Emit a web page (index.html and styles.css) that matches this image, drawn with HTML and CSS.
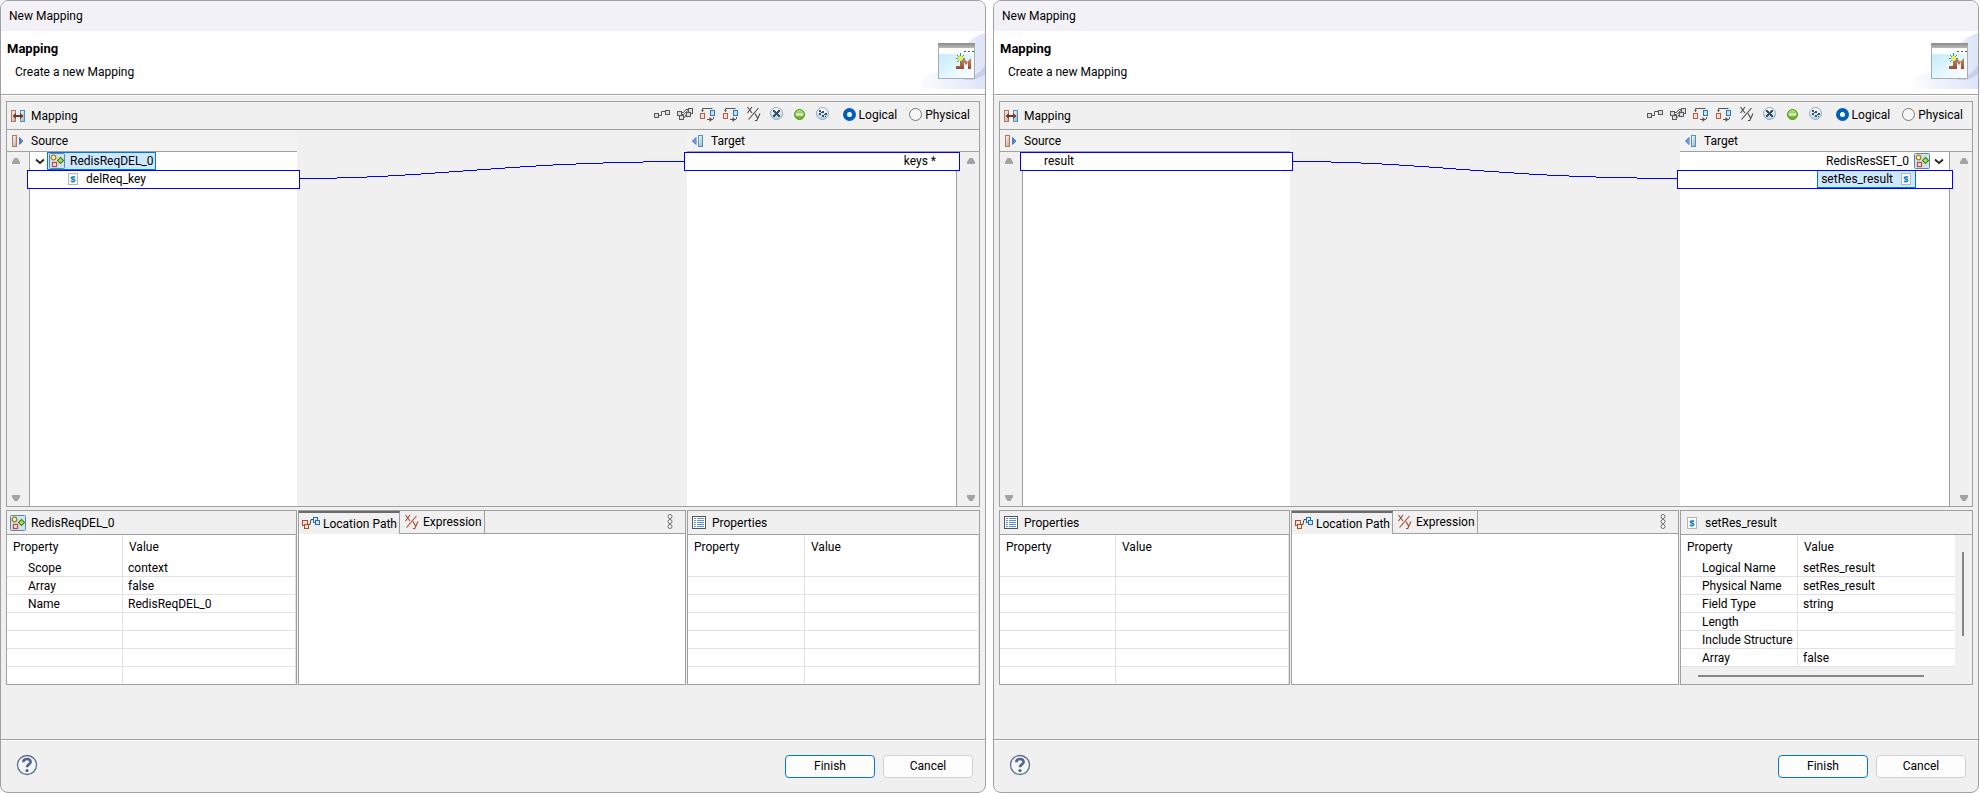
FILE: index.html
```html
<!DOCTYPE html>
<html lang="en">
<head>
    <meta charset="UTF-8">
    <meta name="viewport" content="width=device-width, initial-scale=1.0">
    <title>New Mapping</title>
    <link rel="stylesheet" href="styles.css">
</head>
<body>

    <!-- Icons shared by both dialogs -->
    <svg class="sprite" width="0" height="0" aria-hidden="true">
        <defs>
            <linearGradient id="g-metal" x1="0" y1="0" x2="1" y2="1">
                <stop offset="0" stop-color="#ffffff"/><stop offset="1" stop-color="#a9a9a9"/>
            </linearGradient>
            <linearGradient id="g-arrow" x1="0" y1="0" x2="1" y2="0">
                <stop offset="0" stop-color="#2a5fc4"/><stop offset="1" stop-color="#a8c6f2"/>
            </linearGradient>
            <linearGradient id="g-ball" x1="0" y1="0" x2="0" y2="1">
                <stop offset="0" stop-color="#ffffff"/><stop offset="1" stop-color="#a9d4f0"/>
            </linearGradient>
            <linearGradient id="g-green" x1="0" y1="0" x2="0" y2="1">
                <stop offset="0" stop-color="#b5e37a"/><stop offset="1" stop-color="#58b01c"/>
            </linearGradient>
            <linearGradient id="g-glow" x1="0" y1="0" x2="1" y2="0">
                <stop offset="0" stop-color="#fbfcff"/><stop offset="1" stop-color="#dde5f8"/>
            </linearGradient>
            <linearGradient id="g-pane" x1="0" y1="0" x2="1" y2="1">
                <stop offset="0" stop-color="#c4ecfb"/><stop offset="1" stop-color="#ffffff"/>
            </linearGradient>
            <linearGradient id="g-bar" x1="0" y1="0" x2="0" y2="1">
                <stop offset="0" stop-color="#8a8a8a"/><stop offset="1" stop-color="#b9b9b9"/>
            </linearGradient>
            <linearGradient id="g-m" x1="0" y1="0" x2="0" y2="1">
                <stop offset="0" stop-color="#d08a64"/><stop offset="1" stop-color="#9a4a2a"/>
            </linearGradient>
        </defs>

        <symbol id="i-mapping" viewBox="0 0 16 16">
            <rect x="0.5" y="2.5" width="4" height="11" fill="url(#g-metal)" stroke="#c2714f"/>
            <rect x="9.5" y="2.5" width="4" height="11" fill="url(#g-metal)" stroke="#3f95d6"/>
            <path d="M1.5 8l3.5-3v2h4V5l3.5 3L9 11V9H5v2z" fill="#6b3a2a"/>
        </symbol>
        <symbol id="i-source" viewBox="0 0 16 16">
            <rect x="1.5" y="2.5" width="4" height="11" fill="url(#g-metal)" stroke="#c2714f"/>
            <path d="M8.5 4.5v7l3.5-3.5z" fill="url(#g-arrow)" stroke="#4a78cc"/>
        </symbol>
        <symbol id="i-target" viewBox="0 0 16 16">
            <rect x="7.5" y="2.5" width="4" height="11" fill="url(#g-metal)" stroke="#3f95d6"/>
            <path d="M5 4.5v7L1.5 8z" fill="url(#g-arrow)" stroke="#4a78cc"/>
        </symbol>
        <symbol id="i-struct" viewBox="0 0 16 16">
            <rect x="0.5" y="0.5" width="15" height="15" rx="1" fill="#cfe2f0" stroke="#5f86a8"/>
            <circle cx="4.5" cy="4.5" r="2.3" fill="#fbf2c0" stroke="#a8801a" stroke-width="1.3"/>
            <rect x="3.5" y="9.5" width="4" height="4" fill="#fbe3e0" stroke="#c04a40" stroke-width="1.2"/>
            <path d="M11.5 4.5L14.5 7.5L11.5 10.500L8.500 7.500z" fill="#b9dd6a" stroke="#458c14" stroke-width="1.200"/>
        </symbol>
        <symbol id="i-string" viewBox="0 0 16 16">
            <rect x="3.500" y="2.500" width="9" height="11" fill="#fbfbfb" stroke="#b4b4b4"/>
            <path d="M10 6.500C8.500 5.500 6.300 5.800 6.300 7C6.300 8.400 9.700 7.800 9.700 9.400C9.700 10.800 7.300 11 6 10" fill="none" stroke="#1c86b8" stroke-width="1.600"/>
        </symbol>
        <symbol id="i-props" viewBox="0 0 16 16">
            <rect x="1.500" y="1.500" width="13" height="12" fill="#ffffff" stroke="#555555"/>
            <path d="M3 3.500h10M3 5.500h10M3 7.500h10M3 9.500h10M3 11.500h10" stroke="#5b8fd0"/>
            <path d="M5.500 3v9" stroke="#ffffff"/>
        </symbol>
        <symbol id="i-chevron" viewBox="0 0 10 16">
            <path d="M1 6.500L5 10l4-3.500" fill="none" stroke="#222222" stroke-width="1.700"/>
        </symbol>
        <symbol id="i-up" viewBox="0 0 10 8">
            <path d="M3.500 1h3L9 5v2H1V5z" fill="#a3a3a3"/>
        </symbol>
        <symbol id="i-down" viewBox="0 0 10 8">
            <path d="M1 1h8v2L6.500 7h-3L1 3z" fill="#a3a3a3"/>
        </symbol>

        <!-- Toolbar -->
        <symbol id="i-link" viewBox="0 0 16 16">
            <rect x="0.500" y="7.500" width="4" height="4" fill="#dcdcdc" stroke="#5a5a5a"/>
            <rect x="11.500" y="4.500" width="4" height="4" fill="#dcdcdc" stroke="#5a5a5a"/>
            <path d="M5 9.500h2.500V5.500H11" fill="none" stroke="#555555"/>
        </symbol>
        <symbol id="i-links" viewBox="0 0 16 16">
            <path d="M5 6.500h1.500L9 3.500h2M6 11.500h1.500L9 8.500M4 8.500h2.500L11 4.500" fill="none" stroke="#555555"/>
            <rect x="0.500" y="5.500" width="4" height="4" fill="#dcdcdc" stroke="#5a5a5a"/>
            <rect x="2.500" y="9.500" width="4" height="4" fill="#dcdcdc" stroke="#5a5a5a"/>
            <rect x="11.500" y="2.500" width="4" height="5" fill="#dcdcdc" stroke="#5a5a5a"/>
            <rect x="9.500" y="6.500" width="4" height="4" fill="#dcdcdc" stroke="#5a5a5a"/>
        </symbol>
        <symbol id="i-swap" viewBox="0 0 16 16">
            <rect x="0.500" y="7.500" width="4" height="5" fill="#e4e4e4" stroke="#c05a38"/>
            <rect x="10.500" y="4.500" width="4" height="5" fill="#c8e0f5" stroke="#2478c0"/>
            <path d="M2.500 5.500V2.500H12.500M7 13.500H13M13.500 11V13" fill="none" stroke="#555555"/>
            <path d="M1 4l1.500 2L4 4zM9.500 11v5l3-2.500z" fill="#555555"/>
        </symbol>
        <symbol id="i-xy" viewBox="0 0 16 16">
            <path d="M1.500 1L6 7M6 1L1.500 7M12.500 2L2.500 13.500M9 7.500L11.500 12M14 7.500L10.800 14.500H9" fill="none" stroke="currentColor" stroke-width="1.100"/>
        </symbol>
        <symbol id="i-cross" viewBox="0 0 16 16">
            <circle cx="7.500" cy="7.500" r="6" fill="url(#g-ball)" stroke="#93a9b8"/>
            <path d="M4 4h2v1h1v1h1V5h1V4h2v2h-1v1H9v1h1v1h1v2H9v-1H8V9H7v1H6v1H4V9h1V8h1V7H5V6H4z" fill="#3f4f5b"/>
        </symbol>
        <symbol id="i-minus" viewBox="0 0 16 16">
            <circle cx="7.500" cy="8.500" r="5" fill="url(#g-green)" stroke="#4c951c"/>
            <path d="M4 8.500h7" stroke="#f4fbe8" stroke-width="2"/>
        </symbol>
        <symbol id="i-dots" viewBox="0 0 16 16">
            <circle cx="7.500" cy="7.500" r="6" fill="url(#g-ball)" stroke="#93a9b8"/>
            <path d="M4 4h2v2H4zM7 5h2v2H7zM4 7h2v2H4zM10 7h2v2h-2zM7 9h2v2H7zM10 10h1v1h-1zM6 6h1v1H6zM9 8h1v1H9z" fill="#3f4f5b"/>
        </symbol>

        <!-- Lower tabs -->
        <symbol id="i-path" viewBox="0 0 18 16">
            <rect x="0.500" y="4.500" width="5" height="5" fill="#f8e3d8" stroke="#b04c2c"/>
            <rect x="2.500" y="8.500" width="4" height="4" fill="#f8e3d8" stroke="#b04c2c"/>
            <path d="M7 8.500h1l1-5h2" fill="none" stroke="#444444"/>
            <rect x="11.500" y="1.500" width="4" height="5" fill="#d7e9f8" stroke="#2070b4"/>
            <rect x="13.500" y="4.500" width="4" height="4" fill="#d7e9f8" stroke="#2070b4"/>
        </symbol>
        <symbol id="i-menu" viewBox="0 0 8 16">
            <circle cx="4" cy="2.500" r="2" fill="#ffffff" stroke="#6a6a6a"/>
            <circle cx="4" cy="7.500" r="2" fill="#ffffff" stroke="#6a6a6a"/>
            <circle cx="4" cy="12.500" r="2" fill="#ffffff" stroke="#6a6a6a"/>
        </symbol>
        <symbol id="i-help" viewBox="0 0 22 22">
            <circle cx="11" cy="11" r="9.500" fill="#f5f6f8" stroke="#5b6f91" stroke-width="1.300"/>
            <path d="M7.300 8.200C7.300 3.900 14.600 3.900 14.600 7.900C14.600 10.500 11 10.300 11 13.200" fill="none" stroke="#50658a" stroke-width="2.600"/>
            <circle cx="11" cy="16.600" r="1.600" fill="#50658a"/>
        </symbol>

        <symbol id="i-wizard" viewBox="0 0 64 58">
            <path d="M64 2C50 6 42 16 36 26C26 40 12 43 0 45V58H64z" fill="url(#g-glow)"/>
            <path d="M64 34C58 44 50 47 42 49H52C58 47 62 45 64 43z" fill="#c8d1ec"/>
            <rect x="17.500" y="12.500" width="36" height="35" fill="#ffffff" stroke="#a5adb5"/>
            <rect x="17" y="12" width="37" height="5" fill="url(#g-bar)"/>
            <path d="M43 20h2v1h-2zM47 20h2v1h-2zM51 20h2v1h-2z" fill="#555555"/>
            <rect x="18" y="23" width="34" height="24" fill="url(#g-pane)"/>
            <path d="M35 35h4V27h4l3 4 4-4v11h-3v-7l-2 3-2-3v7h-8z" fill="url(#g-m)"/>
            <path d="M39.500 22v10M35 27.500h9M36 24l7 7M43 24l-7 7" stroke="#2f93a8"/>
            <circle cx="39.500" cy="27.500" r="2.500" fill="#f7ec3c"/>
        </symbol>
    </svg>

    <main class="desktop">

        <!-- Request mapping dialog -->
        <section class="dialog">
            <div class="titlebar">New Mapping</div>
            <header class="banner">
                <div>
                    <h1>Mapping</h1>
                    <p>Create a new Mapping</p>
                </div>
                <svg class="wizard"><use href="#i-wizard"/></svg>
            </header>

            <div class="content">
                <div class="mapping">
                    <div class="toolbar">
                        <svg class="icon"><use href="#i-mapping"/></svg>
                        <h2>Mapping</h2>
                        <div class="tools">
                            <button type="button" aria-label="Link"><svg class="icon"><use href="#i-link"/></svg></button>
                            <button type="button" aria-label="Link all"><svg class="icon"><use href="#i-links"/></svg></button>
                            <button type="button" aria-label="Move source"><svg class="icon"><use href="#i-swap"/></svg></button>
                            <button type="button" aria-label="Move target"><svg class="icon"><use href="#i-swap"/></svg></button>
                            <button type="button" aria-label="Expression"><svg class="icon"><use href="#i-xy"/></svg></button>
                            <button type="button" aria-label="Remove"><svg class="icon"><use href="#i-cross"/></svg></button>
                            <button type="button" aria-label="Collapse"><svg class="icon"><use href="#i-minus"/></svg></button>
                            <button type="button" aria-label="Remove all"><svg class="icon"><use href="#i-dots"/></svg></button>
                        </div>
                        <label class="radio"><input type="radio" name="view1" checked>Logical</label>
                        <label class="radio"><input type="radio" name="view1">Physical</label>
                    </div>

                    <div class="canvas">
                        <div class="side source">
                            <div class="side-title"><svg class="icon"><use href="#i-source"/></svg>Source</div>
                            <div class="side-body">
                                <div class="scroll">
                                    <button type="button" aria-label="Scroll up"><svg><use href="#i-up"/></svg></button>
                                    <button type="button" aria-label="Scroll down"><svg><use href="#i-down"/></svg></button>
                                </div>
                                <ul class="tree">
                                    <li class="row root">
                                        <svg class="chevron"><use href="#i-chevron"/></svg>
                                        <span class="node selected"><svg class="icon"><use href="#i-struct"/></svg>RedisReqDEL_0</span>
                                    </li>
                                    <li class="row linked child">
                                        <svg class="icon"><use href="#i-string"/></svg>delReq_key
                                    </li>
                                </ul>
                            </div>
                        </div>

                        <svg class="wire" viewBox="0 0 390 36" preserveAspectRatio="none">
                            <path d="M3 26.500C135 26.500 215 9.500 387 9.500"/>
                        </svg>

                        <div class="side target">
                            <div class="side-title"><svg class="icon"><use href="#i-target"/></svg>Target</div>
                            <div class="side-body">
                                <ul class="tree">
                                    <li class="row linked leaf">keys *</li>
                                </ul>
                                <div class="scroll">
                                    <button type="button" aria-label="Scroll up"><svg><use href="#i-up"/></svg></button>
                                    <button type="button" aria-label="Scroll down"><svg><use href="#i-down"/></svg></button>
                                </div>
                            </div>
                        </div>
                    </div>
                </div>

                <div class="details">
                    <div class="panel">
                        <div class="panel-title"><svg class="icon"><use href="#i-struct"/></svg>RedisReqDEL_0</div>
                        <table class="props">
                            <thead><tr><th>Property</th><th>Value</th></tr></thead>
                            <tbody>
                                <tr><td>Scope</td><td>context</td></tr>
                                <tr><td>Array</td><td>false</td></tr>
                                <tr><td>Name</td><td>RedisReqDEL_0</td></tr>
                                <tr><td></td><td></td></tr>
                                <tr><td></td><td></td></tr>
                                <tr><td></td><td></td></tr>
                                <tr><td></td><td></td></tr>
                            </tbody>
                        </table>
                    </div>

                    <div class="panel">
                        <div class="tabs">
                            <button type="button" class="tab active"><svg class="icon wide"><use href="#i-path"/></svg>Location Path</button>
                            <button type="button" class="tab"><svg class="icon red"><use href="#i-xy"/></svg>Expression</button>
                            <div class="tab-rest">
                                <button type="button" aria-label="View menu"><svg class="menu"><use href="#i-menu"/></svg></button>
                            </div>
                        </div>
                    </div>

                    <div class="panel">
                        <div class="panel-title"><svg class="icon"><use href="#i-props"/></svg>Properties</div>
                        <table class="props">
                            <thead><tr><th>Property</th><th>Value</th></tr></thead>
                            <tbody>
                                <tr><td></td><td></td></tr>
                                <tr><td></td><td></td></tr>
                                <tr><td></td><td></td></tr>
                                <tr><td></td><td></td></tr>
                                <tr><td></td><td></td></tr>
                                <tr><td></td><td></td></tr>
                                <tr><td></td><td></td></tr>
                            </tbody>
                        </table>
                    </div>
                </div>
            </div>

            <footer class="actions">
                <button type="button" class="help" aria-label="Help"><svg><use href="#i-help"/></svg></button>
                <button type="button" class="btn default">Finish</button>
                <button type="button" class="btn">Cancel</button>
            </footer>
        </section>

        <!-- Response mapping dialog -->
        <section class="dialog">
            <div class="titlebar">New Mapping</div>
            <header class="banner">
                <div>
                    <h1>Mapping</h1>
                    <p>Create a new Mapping</p>
                </div>
                <svg class="wizard"><use href="#i-wizard"/></svg>
            </header>

            <div class="content">
                <div class="mapping">
                    <div class="toolbar">
                        <svg class="icon"><use href="#i-mapping"/></svg>
                        <h2>Mapping</h2>
                        <div class="tools">
                            <button type="button" aria-label="Link"><svg class="icon"><use href="#i-link"/></svg></button>
                            <button type="button" aria-label="Link all"><svg class="icon"><use href="#i-links"/></svg></button>
                            <button type="button" aria-label="Move source"><svg class="icon"><use href="#i-swap"/></svg></button>
                            <button type="button" aria-label="Move target"><svg class="icon"><use href="#i-swap"/></svg></button>
                            <button type="button" aria-label="Expression"><svg class="icon"><use href="#i-xy"/></svg></button>
                            <button type="button" aria-label="Remove"><svg class="icon"><use href="#i-cross"/></svg></button>
                            <button type="button" aria-label="Collapse"><svg class="icon"><use href="#i-minus"/></svg></button>
                            <button type="button" aria-label="Remove all"><svg class="icon"><use href="#i-dots"/></svg></button>
                        </div>
                        <label class="radio"><input type="radio" name="view2" checked>Logical</label>
                        <label class="radio"><input type="radio" name="view2">Physical</label>
                    </div>

                    <div class="canvas">
                        <div class="side source">
                            <div class="side-title"><svg class="icon"><use href="#i-source"/></svg>Source</div>
                            <div class="side-body">
                                <div class="scroll">
                                    <button type="button" aria-label="Scroll up"><svg><use href="#i-up"/></svg></button>
                                    <button type="button" aria-label="Scroll down"><svg><use href="#i-down"/></svg></button>
                                </div>
                                <ul class="tree">
                                    <li class="row linked leaf">result</li>
                                </ul>
                            </div>
                        </div>

                        <svg class="wire" viewBox="0 0 390 36" preserveAspectRatio="none">
                            <path d="M3 9.500C135 9.500 215 26.500 387 26.500"/>
                        </svg>

                        <div class="side target">
                            <div class="side-title"><svg class="icon"><use href="#i-target"/></svg>Target</div>
                            <div class="side-body">
                                <ul class="tree">
                                    <li class="row root">
                                        <span class="node">RedisResSET_0<svg class="icon"><use href="#i-struct"/></svg></span>
                                        <svg class="chevron"><use href="#i-chevron"/></svg>
                                    </li>
                                    <li class="row linked child">
                                        <span class="node selected">setRes_result<svg class="icon"><use href="#i-string"/></svg></span>
                                    </li>
                                </ul>
                                <div class="scroll">
                                    <button type="button" aria-label="Scroll up"><svg><use href="#i-up"/></svg></button>
                                    <button type="button" aria-label="Scroll down"><svg><use href="#i-down"/></svg></button>
                                </div>
                            </div>
                        </div>
                    </div>
                </div>

                <div class="details">
                    <div class="panel">
                        <div class="panel-title"><svg class="icon"><use href="#i-props"/></svg>Properties</div>
                        <table class="props">
                            <thead><tr><th>Property</th><th>Value</th></tr></thead>
                            <tbody>
                                <tr><td></td><td></td></tr>
                                <tr><td></td><td></td></tr>
                                <tr><td></td><td></td></tr>
                                <tr><td></td><td></td></tr>
                                <tr><td></td><td></td></tr>
                                <tr><td></td><td></td></tr>
                                <tr><td></td><td></td></tr>
                            </tbody>
                        </table>
                    </div>

                    <div class="panel">
                        <div class="tabs">
                            <button type="button" class="tab active"><svg class="icon wide"><use href="#i-path"/></svg>Location Path</button>
                            <button type="button" class="tab"><svg class="icon red"><use href="#i-xy"/></svg>Expression</button>
                            <div class="tab-rest">
                                <button type="button" aria-label="View menu"><svg class="menu"><use href="#i-menu"/></svg></button>
                            </div>
                        </div>
                    </div>

                    <div class="panel">
                        <div class="panel-title"><svg class="icon"><use href="#i-string"/></svg>setRes_result</div>
                        <div class="scroll-area">
                            <table class="props">
                                <thead><tr><th>Property</th><th>Value</th></tr></thead>
                                <tbody>
                                    <tr><td>Logical Name</td><td>setRes_result</td></tr>
                                    <tr><td>Physical Name</td><td>setRes_result</td></tr>
                                    <tr><td>Field Type</td><td>string</td></tr>
                                    <tr><td>Length</td><td></td></tr>
                                    <tr><td>Include Structure</td><td></td></tr>
                                    <tr><td>Array</td><td>false</td></tr>
                                </tbody>
                            </table>
                            <div class="bar-v"><div class="thumb"></div></div>
                            <div class="bar-h"><div class="thumb"></div></div>
                        </div>
                    </div>
                </div>
            </div>

            <footer class="actions">
                <button type="button" class="help" aria-label="Help"><svg><use href="#i-help"/></svg></button>
                <button type="button" class="btn default">Finish</button>
                <button type="button" class="btn">Cancel</button>
            </footer>
        </section>

    </main>

</body>
</html>
```
FILE: styles.css
```css
* {
    box-sizing: border-box;
}
body {
    margin: 0;
    background-color: white;
    font-family: Roboto, "Noto Sans CJK KR", sans-serif;
    font-size: 12px;
    line-height: 16px;
    color: black;
}
button {
    padding: 0;
    border: none;
    background: none;
    font: inherit;
    color: inherit;
}
h1, h2, p, ul {
    margin: 0;
    padding: 0;
}
svg {
    display: block;
    flex: none;
}
.sprite {
    position: absolute;
}
.icon {
    width: 16px;
    height: 16px;
}
.icon.wide {
    width: 18px;
}
.icon.red {
    color: #a5462c;
}
.desktop {
    display: grid;
    grid-template-columns: 1fr 1fr;
    gap: 7px;
    min-height: 100vh;
    padding-right: 1px;
}

/* Dialog frame */
.dialog {
    display: flex;
    flex-direction: column;
    min-width: 0;
    border: 1px solid #a0a0a0;
    border-radius: 8px;
    background-color: #f0f0f0;
    overflow: hidden;
}
.titlebar {
    height: 30px;
    padding: 7px 8px;
    background-color: #f3f1f8;
}
.banner {
    display: flex;
    justify-content: space-between;
    align-items: flex-start;
    height: 64px;
    border-bottom: 1px solid #a0a0a0;
    background-color: white;
}
.banner h1 {
    padding: 10px 6px 7px;
    font-size: 13px;
    line-height: 16px;
}
.banner p {
    padding-left: 14px;
}
.wizard {
    width: 64px;
    height: 58px;
}
.content {
    display: flex;
    flex-direction: column;
    flex: 1;
    gap: 3px;
    padding: 5px 5px 54px;
    border-top: 1px solid white;
}

/* Mapping editor */
.mapping {
    display: flex;
    flex-direction: column;
    flex: 1;
    border: 1px solid #a0a0a0;
}
.toolbar {
    display: flex;
    align-items: center;
    height: 28px;
    padding: 0 9px 0 4px;
    border-bottom: 1px solid #a0a0a0;
}
.toolbar h2 {
    flex: 1;
    padding-left: 4px;
    font-size: 12px;
    font-weight: normal;
}
.tools {
    display: flex;
    gap: 7px;
    padding-bottom: 4px;
    color: #4a4a4a;
}
.radio {
    display: flex;
    align-items: center;
    gap: 3px;
    padding-bottom: 2px;
    margin-left: 12px;
}
.radio input {
    appearance: none;
    width: 13px;
    height: 13px;
    margin: 0;
    border: 1px solid #7a7a7a;
    border-radius: 50%;
    background-color: #f6f6f6;
}
.radio input:checked {
    border: 4px solid #005fb8;
    background-color: white;
}
.canvas {
    display: grid;
    grid-template-columns: 290fr 390fr 292fr;
    flex: 1;
}
.side {
    display: flex;
    flex-direction: column;
    min-width: 0;
}
.side-title {
    display: flex;
    align-items: center;
    gap: 4px;
    height: 22px;
    padding-left: 4px;
    border-bottom: 1px solid #a0a0a0;
    background-color: #f2f2f2;
}
.side-body {
    display: flex;
    flex: 1;
}
.scroll {
    display: flex;
    flex-direction: column;
    justify-content: space-between;
    align-items: center;
    width: 22px;
    padding: 5px 4px 4px 0;
}
.target .scroll {
    padding: 5px 0 4px 6px;
}
.scroll svg {
    width: 10px;
    height: 8px;
}
.tree {
    flex: 1;
    list-style: none;
    background-color: white;
}
.source .tree {
    border-left: 1px solid #a0a0a0;
}
.target .tree {
    border-right: 1px solid #a0a0a0;
}
.row {
    display: flex;
    align-items: center;
    height: 18px;
}
.target .row {
    justify-content: flex-end;
}
.source .root {
    padding-left: 5px;
}
.target .root {
    padding-right: 5px;
}
.chevron {
    width: 10px;
    height: 16px;
}
.node {
    display: flex;
    align-items: center;
    gap: 5px;
    height: 18px;
    padding: 0 1px;
    border: 1px solid transparent;
}
.source .node {
    margin-left: 2px;
}
.target .node {
    padding-left: 3px;
}
.target .root .node {
    padding-right: 3px;
}
.selected {
    border-color: #0078d7;
    background-color: #cce8ff;
}

/* Rows with a connection reach past the edges of the list */
.linked {
    position: relative;
    align-items: flex-start;
    height: 19px;
    margin: 0 -3px;
    border: 1px solid #0000ff;
    background-color: white;
}
.target .linked {
    margin-right: -4px;
}
.linked .node {
    height: 17px;
    border-top: none;
}
.source .child {
    gap: 5px;
    padding-left: 37px;
}
.target .child {
    padding-right: 36px;
}
.source .leaf {
    padding-left: 23px;
}
.target .leaf {
    padding-right: 23px;
}
.wire {
    width: 100%;
    height: 36px;
    margin-top: 22px;
}
.wire path {
    fill: none;
    stroke: #0000ff;
    shape-rendering: crispEdges;
    vector-effect: non-scaling-stroke;
}

/* Lower panels */
.details {
    display: grid;
    grid-template-columns: 291fr 388fr 293fr;
    gap: 1px;
    height: 175px;
}
.panel {
    display: flex;
    flex-direction: column;
    min-width: 0;
    border: 1px solid #a0a0a0;
    background-color: white;
}
.panel-title {
    display: flex;
    align-items: center;
    gap: 5px;
    height: 24px;
    padding-left: 3px;
    border-bottom: 1px solid #a0a0a0;
    background-color: #f0f0f0;
}
.props {
    width: 100%;
    table-layout: fixed;
    border-spacing: 0;
    border-right: 1px solid #e2e2e2;
}
.props th {
    height: 24px;
    padding: 0 6px;
    font-weight: normal;
    text-align: left;
}
.props th:first-child {
    width: 116px;
}
.panel:last-child th:first-child {
    width: 117px;
}
.props td {
    height: 18px;
    padding: 0 0 0 5px;
    border-bottom: 1px solid #e2e2e2;
    white-space: nowrap;
}
.props td:first-child {
    padding-left: 21px;
}
.props th:first-child,
.props td:first-child {
    border-right: 1px solid #e2e2e2;
}
.props tr:nth-child(7) td {
    height: 17px;
    border-bottom: none;
}
.scroll-area {
    display: grid;
    grid-template-columns: 1fr 17px;
    grid-template-rows: 1fr 17px;
    flex: 1;
    background-color: #f0f0f0;
}
.scroll-area .props {
    border-right: none;
    background-color: white;
}
.bar-v {
    padding: 17px 7px 0;
}
.bar-v .thumb {
    width: 2px;
    height: 84px;
    background-color: #868686;
}
.bar-h {
    padding: 8px 31px 0 17px;
}
.bar-h .thumb {
    height: 2px;
    background-color: #868686;
}

/* Tabs */
.tabs {
    display: flex;
    height: 23px;
    background-color: #f0f0f0;
}
.tab {
    display: flex;
    align-items: center;
    gap: 3px;
    padding: 0 2px 0 4px;
    border-right: 1px solid #a0a0a0;
    border-bottom: 1px solid #a0a0a0;
}
.tab.active {
    padding-left: 3px;
    border-top: 2px solid #6a6a6a;
    border-bottom: none;
}
.tab-rest {
    display: flex;
    flex: 1;
    justify-content: flex-end;
    align-items: center;
    padding-right: 11px;
    border-bottom: 1px solid #a0a0a0;
}
.menu {
    width: 8px;
    height: 16px;
}

/* Buttons */
.actions {
    display: flex;
    align-items: center;
    gap: 8px;
    height: 53px;
    padding: 0 12px 0 15px;
    border-top: 1px solid #a0a0a0;
    box-shadow: inset 0 1px white;
}
.help {
    margin-right: auto;
    padding-bottom: 2px;
}
.help svg {
    width: 22px;
    height: 22px;
}
.btn {
    width: 90px;
    height: 23px;
    border: 1px solid #d0d0d0;
    border-radius: 4px;
    background-color: #fdfdfd;
}
.btn.default {
    border-color: #0078d4;
}
```
